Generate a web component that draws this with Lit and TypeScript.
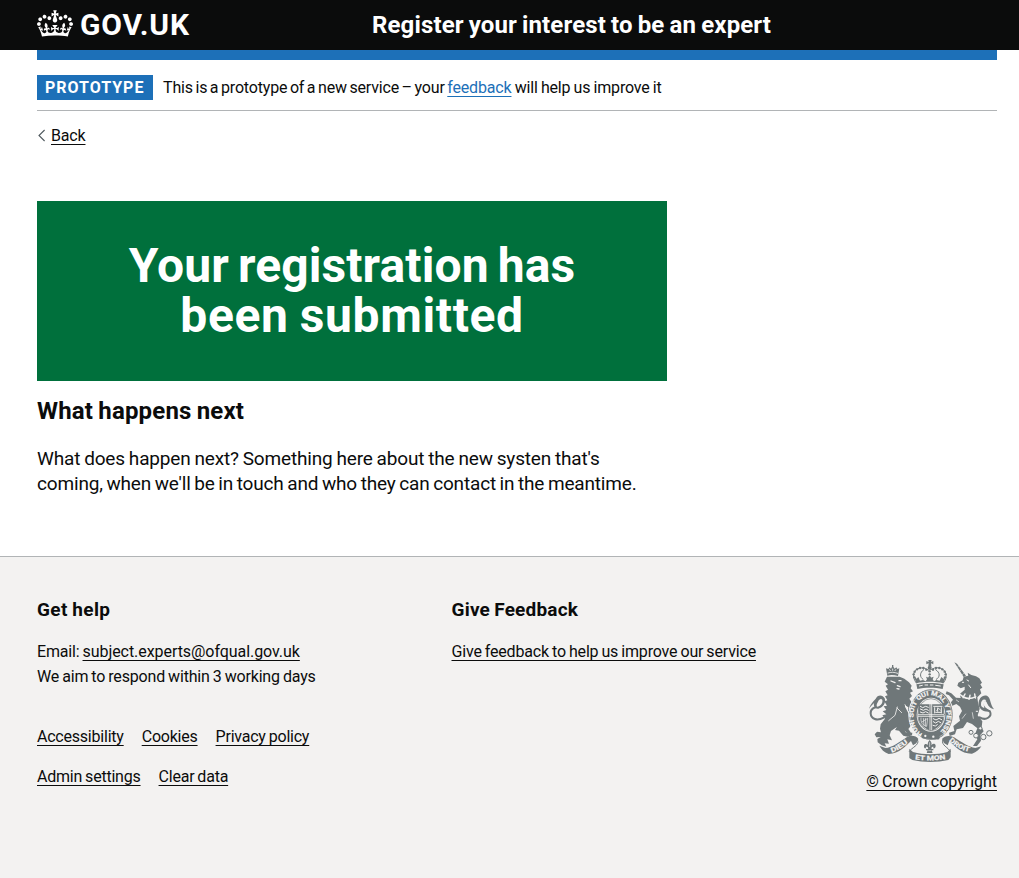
import { LitElement, html, svg, css } from "lit";
import { customElement } from "lit/decorators.js";

const CROWN =
  "M25 30.2c3.5 1.5 7.7-.2 9.1-3.7 1.5-3.6-.2-7.8-3.9-9.2-3.6-1.4-7.6.3-9.1 3.9-1.4 3.5.3 7.5 3.9 9zM9 39.5c3.6 1.5 7.8-.2 9.2-3.7 1.5-3.6-.2-7.8-3.9-9.1-3.6-1.5-7.6.2-9.1 3.8-1.4 3.5.3 7.5 3.8 9zM4.4 57.2c3.5 1.5 7.7-.2 9.1-3.8 1.5-3.6-.2-7.7-3.9-9.1-3.5-1.5-7.6.3-9.1 3.8-1.4 3.5.3 7.6 3.9 9.1zm38.3-21.4c3.5 1.5 7.7-.2 9.1-3.8 1.5-3.6-.2-7.7-3.9-9.1-3.6-1.5-7.6.3-9.1 3.8-1.3 3.6.4 7.7 3.9 9.1zm64.4-5.6c-3.6 1.5-7.8-.2-9.1-3.7-1.5-3.6.2-7.8 3.8-9.2 3.6-1.4 7.7.3 9.2 3.9 1.3 3.5-.4 7.5-3.9 9zm15.9 9.3c-3.6 1.5-7.7-.2-9.1-3.7-1.5-3.6.2-7.8 3.7-9.1 3.6-1.5 7.7.2 9.2 3.8 1.5 3.5-.3 7.5-3.8 9zm4.7 17.7c-3.6 1.5-7.8-.2-9.2-3.8-1.5-3.6.2-7.7 3.9-9.1 3.6-1.5 7.7.3 9.2 3.8 1.3 3.5-.4 7.6-3.9 9.1zM89.3 35.8c-3.6 1.5-7.8-.2-9.2-3.8-1.4-3.6.2-7.7 3.9-9.1 3.6-1.5 7.7.3 9.2 3.8 1.4 3.6-.3 7.7-3.9 9.1zM69.7 17.7l8.9 4.7V9.3l-8.9 2.8c-.2-.3-.5-.6-.9-.9L72.4 0H59.6l3.5 11.2c-.3.3-.6.5-.9.9l-8.8-2.8v13.1l8.8-4.7c.3.3.6.7.9.9l-5 15.4v.1c-.2.8-.4 1.6-.4 2.4 0 4.1 3.1 7.5 7 8.1h.2c.3 0 .7.1 1 .1.4 0 .7 0 1-.1h.2c4-.6 7.1-4.1 7.1-8.1 0-.8-.1-1.7-.4-2.4V34l-5.1-15.4c.4-.2.7-.6 1-.9zM66 92.8c16.9 0 32.8 1.1 47.1 3.2 4-16.9 8.9-26.7 14-33.5l-9.6-3.4c1 4.9 1.1 7.2 0 10.2-1.5-1.4-3-4.3-4.2-8.7L108.6 76c2.8-2 5-3.2 7.5-3.3-4.4 9.4-10 11.9-13.6 11.2-4.3-.8-6.3-4.6-5.6-7.9 1-4.7 5.7-5.9 8-.5 4.3-8.7-3-11.4-7.6-8.8 7.1-7.2 7.9-13.5 2.1-21.1-8 6.1-8.1 12.3-4.5 20.8-4.7-5.4-12.1-2.5-9.5 6.2 3.4-5.2 7.9-2 7.2 3.1-.6 4.3-6.4 7.8-13.5 7.2-10.3-.9-10.9-8-11.2-13.8 2.5-.5 7.1 1.8 11 7.3L80.2 60c-4.1 4.4-8 5.3-12.3 5.4 1.4-4.4 8-11.6 8-11.6H55.5s6.4 7.2 7.9 11.6c-4.2-.1-8-1-12.3-5.4l1.4 16.4c3.9-5.5 8.5-7.7 10.9-7.3-.3 5.8-.9 12.8-11.1 13.8-7.2.6-12.9-2.9-13.5-7.2-.7-5 3.8-8.3 7.1-3.1 2.7-8.7-4.6-11.6-9.4-6.2 3.7-8.5 3.6-14.7-4.6-20.8-5.8 7.6-5 13.9 2.2 21.1-4.7-2.6-11.9.1-7.7 8.8 2.3-5.5 7.1-4.2 8.1.5.7 3.3-1.3 7.1-5.7 7.9-3.5.7-9-1.8-13.5-11.2 2.5.1 4.7 1.3 7.5 3.3l-4.7-15.4c-1.2 4.4-2.7 7.2-4.3 8.7-1.1-3-.9-5.3 0-10.2l-9.5 3.4c5 6.9 9.9 16.7 14 33.5 14.8-2.1 30.8-3.2 47.7-3.2z";

@customElement("royal-arms")
class RoyalArms extends LitElement {
  static styles = css`
    :host { display: block; width: 125px; height: 102px; }
    svg { display: block; width: 125px; height: 102px; }
    .f { fill: #6f7779; }
    .p { fill: #f3f2f1; }
    .l { fill: none; stroke: #6f7779; stroke-linecap: round; stroke-linejoin: round; }
    .w { fill: none; stroke: #f3f2f1; stroke-linecap: round; }
    .m { fill: #f3f2f1; stroke: #f3f2f1; stroke-width: 0.6; font: 700 20px Roboto, "Liberation Sans", sans-serif; letter-spacing: 0; word-spacing: 0; }
    .g { font-size: 19px; }
  `;

  render() {
    const pearls = [
      [178, 82], [176, 73], [179, 65], [186, 58], [195, 54], [205, 54], [214, 59],
      [270, 82], [272, 73], [269, 65], [262, 58], [253, 54], [243, 54], [234, 59],
      [224, 64], [224, 73], [224, 82],
    ];
    return html`<svg viewBox="42 30 375 306" preserveAspectRatio="none" aria-hidden="true">
      <!-- lion -->
      <path class="l" stroke-width="6" d="M86 203C66 214 48 207 47 190C46 176 60 170 68 172C80 170 87 160 84 150C80 142 70 148 66 156" />
      <path class="f" d="M42 177C47 158 60 151 64 143C70 133 84 135 89 145C94 158 84 173 70 176C58 176 54 164 58 158C52 164 46 169 42 177Z" />
      <path class="p" d="M66 170C76 169 84 160 82 150C79 144 72 148 69 155C65 161 64 166 66 170Z" />
      <path class="f" d="M96 80L134 80L148 86L162 97L170 107L167 115L174 124L165 128L171 138L163 146L176 166L172 187L159 183L160 172L150 166L150 170L165 199C171 215 170 228 160 237L168 248L158 250L147 241L136 228L122 233L108 243L104 256L111 271L97 268L102 281L89 280L94 290L80 286L68 277L67 267L77 261L64 262L59 253L66 245L78 247L75 236L77 223L90 206L82 196L94 193L83 184L94 180L86 169L96 167L88 154L97 151L90 139L98 136L91 124L99 119L92 107L99 103L89 95Z" />
      <path class="f" d="M133 220L146 233L152 247L172 248L171 256L158 260L145 257L132 242L120 240Z" />
      <path class="f" d="M97 77L93 55L100 57L104 52L108 56L111 50L111 45H115L115 50L119 56L124 52L127 57L133 55L129 78C119 75 107 74 97 77Z" />
      <path class="w" stroke-width="2.5" d="M99 69C108 66 118 66 128 70M104 59L106 62M113 57V61M122 59L120 62" />
      <path class="w" stroke-width="4" d="M108 93L120 98M132 92L138 92M127 107L135 110M126 116L132 117" />
      <path class="w" stroke-width="2.5" d="M127 171L120 196L101 212M150 164L154 172M126 174L140 188" />

      <!-- unicorn -->
      <path class="f" d="M298 37L306 41L333 77L326 81Z" />
      <path class="w" stroke-width="1.5" d="M306 52L311 48M314 63L319 59M322 74L326 70" />
      <path class="f" d="M326 80L340 77L338 68L349 75L363 79L373 85L381 98L376 103L382 113L375 118L379 130L367 142L369 157L374 176L368 196L382 214L380 232L386 244L376 255L378 272L366 288L354 288L367 268L360 253L367 235L351 222L336 216L324 234L305 238L300 253L284 258L282 248L298 243L295 228L315 212L312 199L321 183L315 170L304 162L292 167L286 178L283 163L294 149L282 136L272 132L275 124L289 130L303 143L317 144L314 132L329 119L329 110L317 115L307 107L310 98L323 91Z" />
      <path class="w" stroke-width="4.5" d="M307 125C324 145 344 150 362 140M315 118L311 132M330 132L324 143M345 136L342 148M359 132L361 144" />
      <path class="w" stroke-width="3" d="M322 97L326 97M336 90L341 93M341 105L347 113" />
      <path class="w" stroke-width="2" d="M352 188L355 205M332 192L322 205M304 150L311 155" />
      <path class="l" stroke-width="6" d="M374 202C393 214 412 199 405 185C397 178 378 180 376 165C374 148 390 140 399 150" />
      <path class="f" d="M371 164C369 145 384 132 397 138C408 144 404 162 417 178C404 175 399 167 395 157C391 149 385 154 386 163C388 174 399 178 408 183C395 188 374 183 371 164Z" />
      <path class="p" d="M378 164C377 152 386 145 394 151C387 154 385 160 388 174C382 172 378 169 378 164Z" />
      ${[[348, 247, 6], [363, 257, 7], [385, 261, 8], [403, 250, 8], [376, 235, 5], [366, 184, 4]].map(
        ([x, y, r]) => svg`<circle cx=${x} cy=${y} r=${r} fill="#f3f2f1" stroke="#6f7779" stroke-width="3"/>`
      )}

      <!-- garter and shield -->
      <ellipse class="p" cx="228" cy="194" rx="68" ry="79" />
      <ellipse class="f" cx="228" cy="194" rx="65" ry="76" />
      <ellipse class="w" cx="228" cy="194" rx="62" ry="73" stroke-width="1.5" />
      <ellipse class="p" cx="228" cy="194" rx="43" ry="51" />
      <ellipse class="l" cx="228" cy="194" rx="40" ry="48" stroke-width="2" />
      <path id="garter" fill="none" d="M203 251C165 234 166 155 208 140C225 132 245 136 257 149C285 178 279 235 245 253" />
      <text class="m g"><textPath href="#garter" textLength="292" lengthAdjust="spacingAndGlyphs">HONI SOIT QUI MAL Y PENSE</textPath></text>
      <path class="f" d="M190 163H266V198C266 222 246 236 228 243C209 236 190 222 190 198Z" />
      <path class="w" stroke-width="2.5" d="M225 162V240M230 162V240M190 194H266M190 199H266" />
      <path class="w" stroke-width="3" d="M196 169L203 173L212 169L220 172M196 177L205 181L213 177L220 181M196 186L204 189L212 185L220 189M236 169L261 169M239 173V189M259 173V189M242 187H258M245 181L251 175L256 180M248 174V184M235 206L243 210L252 205L260 209M235 215L242 219L250 214L257 218M234 226L241 228L247 224" />
      <path class="w" stroke-width="2" d="M198 204C196 217 204 227 215 229L218 205L201 216M205 205L207 225M211 205L212 228" />
      <rect class="f" x="200" y="252" width="54" height="15" rx="5" transform="rotate(4 227 259)" />
      <circle class="p" cx="211" cy="258" r="3.5" /><circle class="p" cx="235" cy="260" r="3.5" />

      <!-- royal crown -->
      <path class="p" d="M174 116L170 70L184 51L210 48L224 51L246 48L267 55L277 72L273 116Z" />
      <path class="f" d="M220 30H230L228 36L235 33V43L228 40L229 49H220L221 40L214 43V33L221 36Z" />
      <circle class="f" cx="224" cy="53" r="6" />
      <path class="l" stroke-width="3" d="M184 99C166 76 178 50 207 54L222 61L239 54C270 48 284 77 265 99M206 59C193 68 194 82 204 88M242 59C257 68 255 82 244 88" />
      ${pearls.map(([x, y]) => svg`<circle class="f" cx=${x} cy=${y} r="3.6"/>`)}
      <path class="f" d="M184 100L177 79L185 86L190 81L195 92L204 90L212 94L216 88L213 80L221 83L224 77L227 83L236 80L233 88L237 94L244 90L254 92L259 81L265 86L273 79L265 100C240 94 208 94 184 100Z" />
      <path class="f" d="M184 103C209 98 240 98 266 103L263 117C240 112 209 112 187 117Z" />
      <path class="w" stroke-width="3" d="M193 108L202 106M210 105L218 105M226 105L234 105M242 106L256 108" />

      <!-- ribbon -->
      <path class="f" d="M73 287L91 294C112 293 133 276 156 261C169 254 184 258 190 267L184 280L174 286L168 273C154 286 133 312 101 312C87 307 79 298 73 287Z" />
      <path class="f" d="M379 289L361 294C341 292 318 275 297 262C283 255 269 257 261 267L267 279L278 286L283 273C299 288 319 312 351 311C365 306 373 298 379 289Z" />
      <path class="l" stroke-width="3" d="M188 271C195 285 169 293 163 304M263 271C257 285 281 293 286 304" />
      <path class="f" d="M163 296L174 306C206 315 246 315 277 306L287 296V322L280 330C247 338 205 338 172 330L163 324Z" />
      <path id="dieu" fill="none" d="M110 308C128 303 146 291 167 272" />
      <path id="mon" fill="none" d="M180 328Q226 335 275 327" />
      <path id="droit" fill="none" d="M282 272C302 291 323 303 350 307" />
      <text class="m"><textPath href="#dieu" textLength="58" lengthAdjust="spacingAndGlyphs">DIEU</textPath></text>
      <text class="m"><textPath href="#mon" textLength="92" lengthAdjust="spacingAndGlyphs">ET MON</textPath></text>
      <text class="m"><textPath href="#droit" textLength="70" lengthAdjust="spacingAndGlyphs">DROIT</textPath></text>
      <path class="f" d="M224 270C231 277 231 283 227 289C230 280 241 279 242 287C242 294 237 297 234 294L236 291C231 289 228 293 230 297H235V301H230L233 309H215L218 301H213V297H219C221 293 217 289 212 291L214 294C210 297 206 293 207 287C208 279 219 281 221 289C217 283 217 277 224 270Z" />
      <path class="w" stroke-width="2" d="M221 302H228M224 278V290" />
    </svg>`;
  }
}

@customElement("app-root")
class AppRoot extends LitElement {
  static styles = css`
    :host {
      display: flex; flex-direction: column; min-height: 878px;
      background: #fff; color: #0b0c0c;
      font: 400 16px/25px Roboto, "Liberation Sans", sans-serif;
      letter-spacing: -0.17px; word-spacing: -0.75px;
    }
    h1, h2, p, ul { margin: 0; padding: 0; }
    a {
      color: inherit; text-decoration: underline; text-decoration-thickness: 1px;
      text-underline-offset: 2.5px; text-decoration-skip-ink: none;
    }
    .wrap { margin: 0 22px 0 37px; }
    header { background: #0b0c0c; color: #fff; height: 50px; }
    .bar { display: flex; height: 50px; align-items: center; }
    .logo { display: flex; align-items: center; width: 335px; height: 50px; gap: 7px; font: 700 30px/50px Roboto, sans-serif; letter-spacing: 0.85px; }
    .logo svg { width: 36px; height: 27px; fill: #fff; margin-top: -3px; }
    .service { font: 700 24px/50px Roboto, sans-serif; letter-spacing: 0.13px; word-spacing: -1px; }
    .stripe { height: 10px; background: #1d70b8; }
    .phase { display: flex; height: 35px; padding-top: 15px; gap: 10px; border-bottom: 1px solid #b1b4b6; }
    .tag { width: 100px; height: 25px; padding: 0 8px; background: #1d70b8; color: #fff; font-weight: 700; letter-spacing: 0.98px; white-space: nowrap; }
    .intro { word-spacing: -1.2px; }
    .phase a { color: #1d70b8; }
    .rest { word-spacing: -0.6px; }
    .back { display: flex; align-items: center; height: 25px; margin-top: 12px; gap: 5px; }
    .back svg { width: 9px; height: 13px; fill: none; stroke: #505a5f; stroke-width: 1.1; }
    main { width: 630px; padding-top: 53px; }
    .panel { background: #00703c; color: #fff; text-align: center; padding: 40px 0; height: 100px; }
    .panel h1 { font: 700 48px/50px Roboto, sans-serif; letter-spacing: 0.1px; word-spacing: -3px; }
    .panel span { display: block; }
    .panel .l2 { letter-spacing: 0.65px; word-spacing: -1.5px; }
    .next { font: 700 24px/30px Roboto, sans-serif; letter-spacing: 0.18px; word-spacing: -1px; margin-top: 15px; }
    .lead { font-size: 19px; line-height: 25px; margin-top: 20px; white-space: nowrap; }
    .lead1 { word-spacing: -0.6px; }
    .lead2 { word-spacing: -0.9px; }
    footer { flex: 1; margin-top: 60px; border-top: 1px solid #b1b4b6; background: #f3f2f1; }
    .cols { display: grid; grid-template-columns: 414.5px 1fr; padding-top: 40px; }
    .cols h2 { font: 700 19px/25px Roboto, sans-serif; letter-spacing: 0.4px; margin-bottom: 17px; }
    .cols .give { letter-spacing: 0.2px; }
    .email { letter-spacing: -0.06px; }
    .meta { display: flex; justify-content: space-between; align-items: flex-end; height: 105px; }
    ul { list-style: none; display: flex; gap: 18px; }
    ul + ul { margin-top: 15px; }
    .links { padding-bottom: 5px; letter-spacing: -0.22px; }
    .arms { display: flex; flex-direction: column; align-items: center; gap: 7px; }
    .copy { letter-spacing: -0.02px; }
  `;

  render() {
    return html`
      <header>
        <div class="wrap bar">
          <div class="logo">
            <svg viewBox="0 0 132 97" aria-hidden="true"><path fill-rule="evenodd" d=${CROWN} /></svg>
            <span>GOV.UK</span>
          </div>
          <div class="service">Register your interest to be an expert</div>
        </div>
      </header>
      <div class="wrap">
        <div class="stripe"></div>
        <div class="phase">
          <strong class="tag">PROTOTYPE</strong>
          <span><span class="intro">This is a prototype of a new service – your </span><a>feedback</a><span class="rest"> will help us improve it</span></span>
        </div>
        <div class="back"><svg viewBox="0 0 9 13"><path d="M7.6 1L2 6.5L7.6 12" /></svg><a>Back</a></div>
        <main>
          <div class="panel"><h1><span>Your registration has</span> <span class="l2">been submitted</span></h1></div>
          <h2 class="next">What happens next</h2>
          <p class="lead"><span class="lead1">What does happen next? Something here about the new systen that's</span><br /><span class="lead2">coming, when we'll be in touch and who they can contact in the meantime.</span></p>
        </main>
      </div>
      <footer>
        <div class="wrap">
          <div class="cols">
            <section>
              <h2>Get help</h2>
              <p>Email: <a class="email">subject.experts@ofqual.gov.uk</a></p>
              <p>We aim to respond within 3 working days</p>
            </section>
            <section>
              <h2 class="give">Give Feedback</h2>
              <p><a>Give feedback to help us improve our service</a></p>
            </section>
          </div>
          <div class="meta">
            <div class="links">
              <ul><li><a>Accessibility</a></li><li><a>Cookies</a></li><li><a>Privacy policy</a></li></ul>
              <ul><li><a>Admin settings</a></li><li><a>Clear data</a></li></ul>
            </div>
            <div class="arms"><royal-arms></royal-arms><a class="copy">© Crown copyright</a></div>
          </div>
        </div>
      </footer>`;
  }
}
